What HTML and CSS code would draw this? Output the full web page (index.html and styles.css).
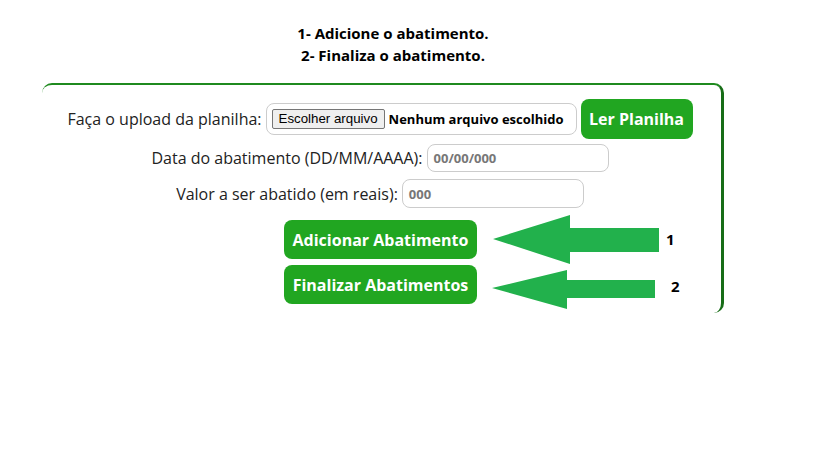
FILE: index.html
```html
<!DOCTYPE html>
<html lang="pt-BR">
<head>
<meta charset="utf-8">
<link rel="stylesheet" href="styles.css">
</head>
<body>
<div class="steps">
  <div>1- Adicione o abatimento.</div>
  <div>2- Finaliza o abatimento.</div>
</div>
<div class="panel">
  <div class="row row-upload">
    <span class="label">Faça o upload da planilha:</span>
    <div class="file">
      <span class="file-btn">Escolher arquivo</span>
      <span class="file-name">Nenhum arquivo escolhido</span>
    </div>
    <button class="btn btn-read">Ler Planilha</button>
  </div>
  <div class="row row-date">
    <span class="label">Data do abatimento (DD/MM/AAAA):</span>
    <div class="field field-date">00/00/000</div>
  </div>
  <div class="row row-value">
    <span class="label">Valor a ser abatido (em reais):</span>
    <div class="field field-value">000</div>
  </div>
  <div class="actions">
    <button class="btn btn-action">Adicionar Abatimento</button>
    <button class="btn btn-action">Finalizar Abatimentos</button>
    <svg class="arrows" width="200" height="100" viewBox="0 0 200 100">
      <polygon fill="#22b14c" points="3,27 80,3 80,16 169,16 169,40 80,40 80,52"/>
      <polygon fill="#22b14c" points="2,76 77,58 77,68 165,68 165,86 77,86 77,97"/>
      <text x="176" y="33" class="num">1</text>
      <text x="181" y="80" class="num">2</text>
    </svg>
  </div>
</div>
</body>
</html>
```
FILE: styles.css
```css
* { box-sizing: border-box; }
body {
  margin: 0;
  background: #fff;
  font-family: "Open Sans", "Noto Sans", sans-serif;
  color: #222;
}
.steps {
  padding: 22px 33px 0 0;
  text-align: center;
  font-weight: 700;
  font-size: 15px;
  line-height: 22px;
  color: #000;
}
.panel {
  margin: 17px 0 0 42px;
  width: 682px;
  border-top: 2px solid #1f8a1f;
  border-right: 3px solid #176d17;
  border-radius: 10px;
  padding: 14px 3px 9px 0;
}
.row {
  display: flex;
  justify-content: center;
  align-items: center;
  gap: 4px;
}
.label {
  font-size: 16px;
  color: #222;
}
.row-upload { height: 40px; margin-bottom: 5px; }
.row-date { height: 28px; margin-bottom: 7px; }
.row-value { height: 29px; margin-bottom: 12px; }
.file {
  display: flex;
  align-items: center;
  width: 311px;
  height: 32px;
  border: 1px solid #ccc;
  border-radius: 8px;
  padding: 0 5px;
  gap: 4px;
}
.file-btn {
  display: inline-block;
  height: 20px;
  line-height: 18px;
  padding: 0 6px;
  border: 1px solid #767676;
  border-radius: 2px;
  background: #efefef;
  font-family: "Liberation Sans", Arial, sans-serif;
  font-size: 13.3px;
  color: #000;
}
.file-name {
  font-size: 13px;
  font-weight: 700;
  color: #000;
}
.btn {
  border: none;
  background: #21a621;
  color: #fff;
  font-family: "Open Sans", "Noto Sans", sans-serif;
  font-weight: 700;
  font-size: 16px;
  border-radius: 8px;
  padding: 0;
  cursor: pointer;
}
.btn-read {
  width: 112px;
  height: 40px;
}
.field {
  height: 100%;
  border: 1px solid #ccc;
  border-radius: 8px;
  padding: 0 6px;
  display: flex;
  align-items: center;
  font-size: 13px;
  font-weight: 700;
  color: #777;
}
.field-date { width: 182px; }
.field-value { width: 182px; }
.actions {
  position: relative;
  width: 193px;
  margin-left: 242px;
  display: flex;
  flex-direction: column;
  gap: 6px;
}
.btn-action {
  width: 193px;
  height: 39px;
}
.arrows {
  position: absolute;
  left: 206px;
  top: -8px;
}
.num {
  font-family: "Open Sans", "Noto Sans", sans-serif;
  font-weight: 700;
  font-size: 15px;
  fill: #000;
}
```
